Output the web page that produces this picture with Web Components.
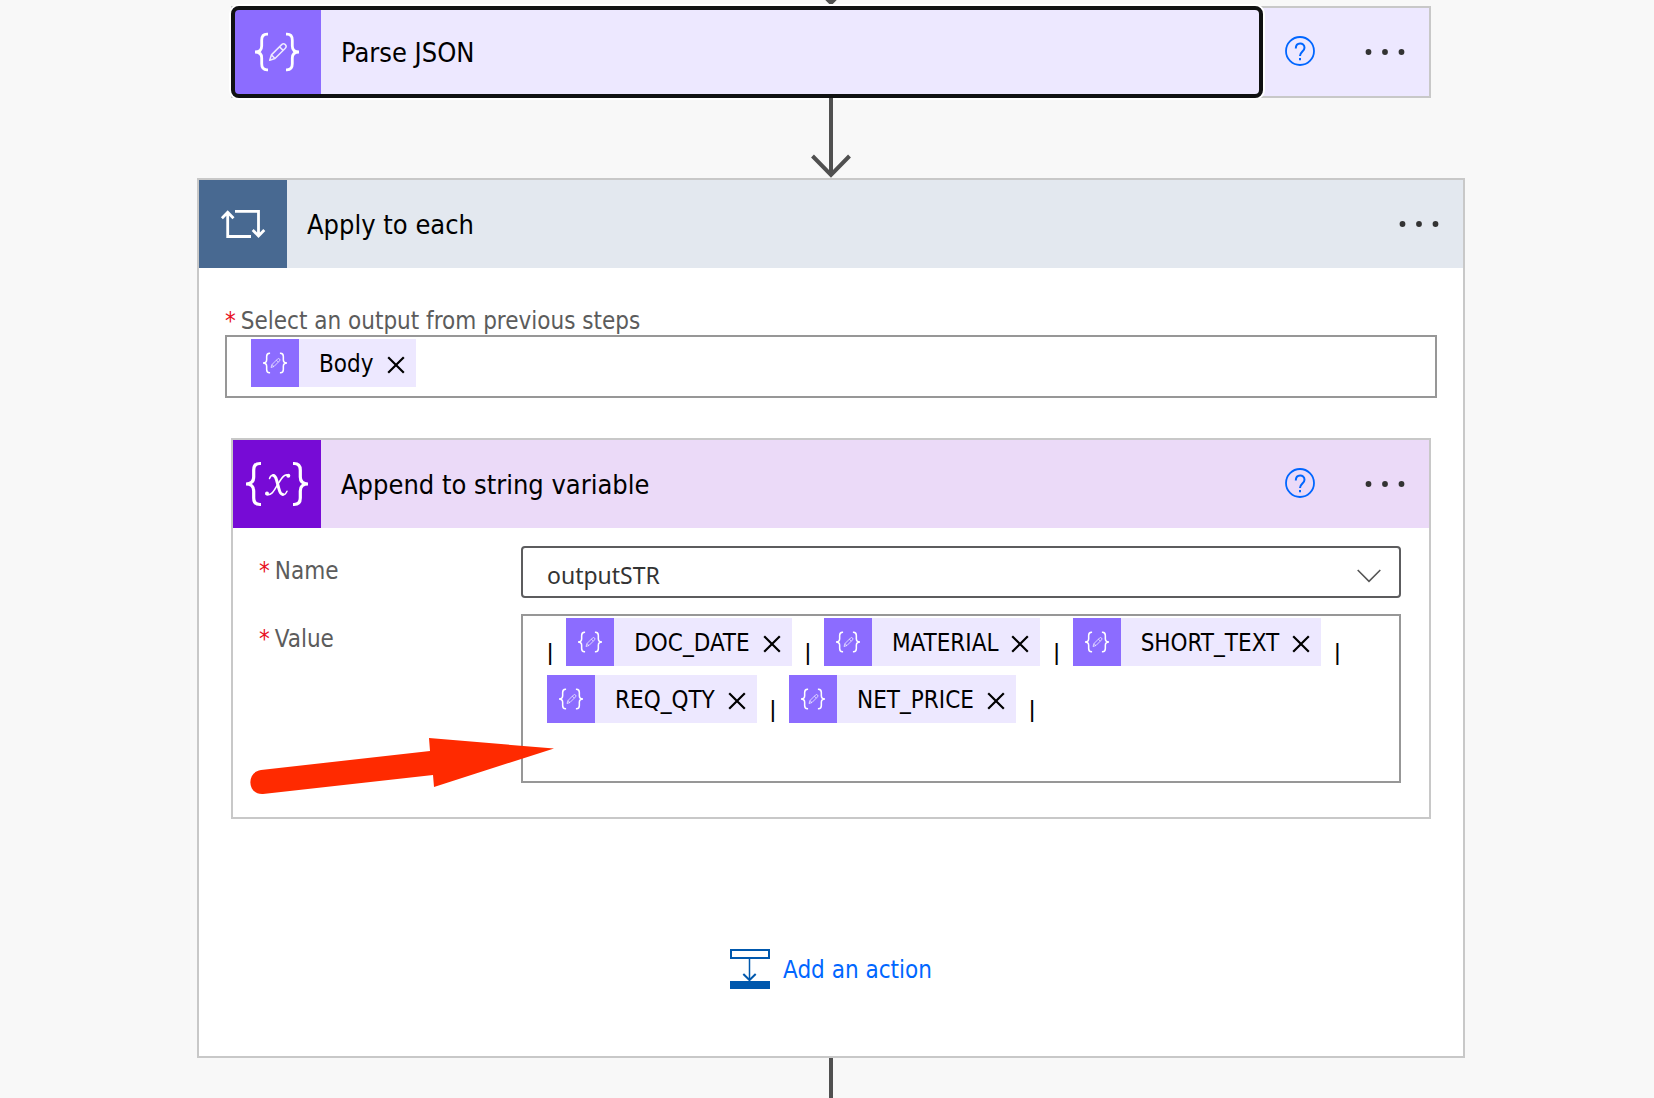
<!DOCTYPE html>
<html lang="en">
<head>
<meta charset="utf-8">
<meta name="viewport" content="width=device-width, initial-scale=1">
<title>Flow designer</title>
<style>
  body {
    margin: 0;
    padding: 0 0 0 8px;
    background: #f8f8f8;
    color: #000;
    font-family: "DejaVu Sans Condensed", "Noto Sans", sans-serif;
    font-size: 24px;
  }
</style>
</head>
<body>
<flow-canvas>
  <flow-connector size="stub" arrow></flow-connector>
  <flow-card class="step" kind="json" heading="Parse JSON" help focused></flow-card>
  <flow-connector size="full" arrow></flow-connector>
  <flow-card kind="loop" heading="Apply to each">
    <flow-scope>
      <token-field label="Select an output from previous steps">
        <flow-token>Body</flow-token>
      </token-field>
      <flow-card class="nested" kind="variable" heading="Append to string variable" help>
        <flow-form>
          <select-field label="Name" value="outputSTR"></select-field>
          <token-field label="Value" inline>
            <token-bar></token-bar>
            <flow-token>DOC_DATE</flow-token>
            <token-bar></token-bar>
            <flow-token>MATERIAL</flow-token>
            <token-bar></token-bar>
            <flow-token>SHORT_TEXT</flow-token>
            <token-bar></token-bar>
            <flow-token>REQ_QTY</flow-token>
            <token-bar></token-bar>
            <flow-token>NET_PRICE</flow-token>
            <token-bar></token-bar>
          </token-field>
        </flow-form>
        <pointer-arrow></pointer-arrow>
      </flow-card>
      <add-action>Add an action</add-action>
    </flow-scope>
  </flow-card>
  <flow-connector size="tail"></flow-connector>
</flow-canvas>

<script>
const define = (name, render) => customElements.define(name, class extends HTMLElement {
  constructor() {
    super();
    this.attachShadow({ mode: "open" });
  }
  connectedCallback() {
    this.shadowRoot.innerHTML = render(this);
  }
});

const icons = {
  json: `<svg viewBox="0 0 88 88" fill="none" stroke="#fff" aria-hidden="true">
    <g stroke-width="2.8">
      <path d="M35 26.2h-1c-3.6 0-5.3 2.2-5.3 6V38c0 3.700-2 6-6.700 6 4.700 0 6.700 2.300 6.700 6v5.800c0 3.800 1.700 6 5.300 6h1"/>
      <path d="M53 26.200h1c3.600 0 5.300 2.200 5.300 6V38c0 3.700 2 6 6.700 6-4.700 0-6.700 2.300-6.700 6v5.800c0 3.800-1.700 6-5.300 6h-1"/>
    </g>
    <path stroke-width="1.500" stroke-opacity=".85" stroke-linejoin="round" d="M36.700 52.200l1.700-5.300 10.300-10.300a2.500 2.500 0 0 1 3.600 3.600L42 50.500zM38.400 46.900l3.600 3.600M46.500 38.800l3.600 3.600"/>
  </svg>`,
  loop: `<svg viewBox="0 0 88 88" fill="none" stroke="#fff" stroke-width="2.800" aria-hidden="true">
    <path d="M28.700 31.500V56.500H52M22.900 38.200l5.800-6 5.800 6"/>
    <path d="M36 31.300h23.500V56M53.700 50l5.800 6 5.800-6"/>
  </svg>`,
  variable: `<svg viewBox="0 0 88 88" fill="none" stroke="#fff" aria-hidden="true">
    <g stroke-width="3.200">
      <path d="M28 23.500h-1c-4.500 0-6.300 2.200-6.300 6.500v7c0 4.500-2 7-7.700 7 5.700 0 7.700 2.500 7.700 7v7c0 4.300 1.800 6.500 6.300 6.500h1"/>
      <path d="M60 23.500h1c4.500 0 6.300 2.200 6.300 6.500v7c0 4.500 2 7 7.700 7-5.700 0-7.700 2.500-7.700 7v7c0 4.300-1.800 6.500-6.300 6.500h-1"/>
    </g>
    <g stroke-linecap="round">
      <path stroke-width="3" d="M40.500 35.500c2 .3 2.500 2.500 3.200 5l2.300 8.500c.8 3.300 1.600 5.300 3.600 5.300"/>
      <path stroke-width="1.500" d="M36.500 38.500c.8-2.300 2.200-3.500 4.200-3.400M49.500 55c2 0 3.500-1.500 4.500-3.800"/>
      <path stroke-width="1.600" d="M55.500 35.300c-4-2-6.700 2.700-10.500 8.700s-6.500 12.500-11.500 10.300"/>
    </g>
    <g fill="#fff" stroke="none"><circle cx="55.300" cy="35.800" r="2"/><circle cx="34" cy="53.600" r="2"/></g>
  </svg>`
};

define("flow-canvas", () => `
  <style>
    :host { display: block; }
    main { max-width: 1268px; margin: 0 auto; display: flex; flex-direction: column; }
    ::slotted(.step) { margin: 0 34px; }
  </style>
  <main><slot></slot></main>`);

define("flow-connector", el => `
  <style>
    :host { display: flex; justify-content: center; align-items: flex-end; position: relative; overflow: hidden; height: 80px; }
    :host([size="stub"]) { height: 6px; }
    :host([size="tail"]) { height: 40px; }
    svg { display: block; flex: none; }
  </style>
  <svg width="44" height="80" viewBox="0 0 44 80" fill="none" stroke="#505050" stroke-width="4" aria-hidden="true">
    <path d="${el.hasAttribute("arrow") ? "M22 0v76M3.500 58L22 77l18.500-19" : "M22 0v80"}"/>
  </svg>`);

define("flow-card", el => `
  <style>
    :host { display: block; position: relative; border: 2px solid #c8c8c8; background: #fff; }
    header { display: flex; height: 88px; background: var(--tint); }
    :host([kind="json"]) { --accent: #8c6cff; --tint: #ede8ff; }
    :host([kind="loop"]) { --accent: #486991; --tint: #e3e8ef; }
    :host([kind="variable"]) { --accent: #770bd6; --tint: #ebdaf8; }
    button { margin: 0; padding: 0; border: 0; background: none; color: inherit; font: inherit; cursor: pointer; }
    .title { position: relative; flex: 1; min-width: 0; display: flex; align-items: center; gap: 20px; font-size: 27px; line-height: 36px; text-align: left; }
    .icon { width: 88px; height: 88px; background: var(--accent); }
    .text { padding-top: 2px; }
    :host([focused]) .title::after {
      content: ""; position: absolute; inset: -2px; border: 4px solid #101112; border-radius: 8px; box-shadow: 0 0 0 2px #fff;
    }
    .help { width: 78px; }
    .menu { width: 90px; }
    svg { display: block; }
    .help svg, .menu svg { margin: 0 auto; }
  </style>
  <header>
    <button class="title" type="button"><span class="icon">${icons[el.getAttribute("kind")]}</span><span class="text">${el.getAttribute("heading")}</span></button>
    ${el.hasAttribute("help") ? `<button class="help" type="button" aria-label="Help">
      <svg width="32" height="34" viewBox="0 0 32 34" fill="none" stroke="#0066ff" stroke-width="1.800">
        <circle cx="16" cy="16" r="14"/>
        <path stroke-width="2" d="M11.800 13.500c0-6.500 8.700-6.300 8.700-.8 0 3.700-4.500 4-4.500 8.300M16 23v2.200"/>
      </svg></button>` : ""}
    <button class="menu" type="button" aria-label="More commands">
      <svg width="42" height="8" viewBox="0 0 42 8" fill="#333"><circle cx="5.500" cy="4" r="2.900"/><circle cx="22" cy="4" r="2.900"/><circle cx="38.500" cy="4" r="2.900"/></svg>
    </button>
  </header>
  <slot></slot>`);

define("flow-scope", () => `
  <style>
    :host { display: flex; flex-direction: column; padding: 39px 26px 67px; }
    ::slotted(.nested) { margin: 40px 6px 130px; }
  </style>
  <slot></slot>`);

define("flow-form", () => `
  <style>
    :host { display: flex; flex-direction: column; gap: 16px; padding: 18px 28px 34px 26px; }
  </style>
  <slot></slot>`);

const fieldStyle = `
  :host { display: block; }
  .label { display: flex; gap: 5px; color: #5c5c5c; line-height: 28px; }
  .star { color: #e81123; }
  .inline { display: grid; grid-template-columns: 262px minmax(0, 1fr); }
  .inline > .label { padding-top: 11px; }
`;

define("token-field", el => `
  <style>${fieldStyle}
    .box { display: flex; flex-wrap: wrap; align-content: flex-start; row-gap: 9px; box-sizing: border-box; min-height: 63px; padding: 2px 24px; border: 2px solid #979797; background: #fff; outline: none; }
    .inline > .box { min-height: 169px; }
  </style>
  <div class="${el.hasAttribute("inline") ? "inline" : "stacked"}">
    <div class="label"><span class="star" aria-hidden="true">*</span><span id="label">${el.getAttribute("label")}</span></div>
    <div class="box" role="textbox" tabindex="0" aria-multiline="true" aria-required="true" aria-labelledby="label"><slot></slot></div>
  </div>`);

define("select-field", el => `
  <style>${fieldStyle}
    .control { display: grid; }
    select, svg { grid-area: 1 / 1; }
    select { appearance: none; box-sizing: border-box; width: 100%; height: 52px; margin: 0; padding: 6px 64px 0 24px; border: 2px solid #5c5c5e; border-radius: 4px; background: #fff; color: #333; font: 23px/32px "Noto Sans", sans-serif; }
    svg { justify-self: end; align-self: center; margin: 8px 20px 0 0; pointer-events: none; }
  </style>
  <div class="inline">
    <label class="label" for="control"><span class="star" aria-hidden="true">*</span><span>${el.getAttribute("label")}</span></label>
    <div class="control">
      <select id="control" required><option>${el.getAttribute("value")}</option></select>
      <svg width="24" height="14" viewBox="0 0 24 14" fill="none" stroke="#555" stroke-width="1.600" aria-hidden="true"><path d="M.700 1L12 12.400 23.300 1"/></svg>
    </div>
  </div>`);

define("flow-token", () => `
  <style>
    :host { display: inline-flex; align-items: center; height: 48px; background: #ede8ff; color: #000; line-height: 32px; }
    .icon { width: 48px; height: 48px; margin-right: 20px; background: #8c6cff; }
    .text { padding-top: 2px; }
    button { width: 42px; height: 48px; margin: 0; padding: 0 0 0 13px; border: 0; background: none; cursor: pointer; }
    svg { display: block; }
  </style>
  <span class="icon">${icons.json}</span>
  <span class="text"><slot></slot></span>
  <button type="button" aria-label="Remove"><svg width="18" height="22" viewBox="0 0 18 22" fill="none" stroke="#000" stroke-width="2.200" aria-hidden="true"><path d="M1.200 5.200l15.600 15.600M16.800 5.200L1.200 20.800"/></svg></button>`);

define("token-bar", () => `
  <style>
    :host { display: block; align-self: flex-end; margin: 0 13px; font: 24px/28px "Liberation Sans", sans-serif; color: #000; }
    :host(:first-child) { margin-left: 0; }
  </style>|`);

define("add-action", () => `
  <style>
    :host { display: flex; justify-content: center; }
    button { display: flex; align-items: center; gap: 13px; margin: 0; padding: 0; border: 0; background: none; color: #0066ff; font: inherit; line-height: 28px; cursor: pointer; }
    .text { padding-top: 2px; }
    svg { display: block; }
  </style>
  <button type="button">
    <svg width="40" height="40" viewBox="0 0 40 40" fill="none" stroke="#0058ad" stroke-width="2" aria-hidden="true">
      <path d="M1 1h38v8H1z"/><path stroke-width="1.500" d="M19.500 10v20"/><path d="M13.300 25l6.200 6 6.200-6"/><path fill="#0058ad" stroke="none" d="M0 32h40v8H0z"/>
    </svg>
    <span class="text"><slot></slot></span>
  </button>`);

/* Annotation drawn over the card, pointing at the value box. */
define("pointer-arrow", () => `
  <style>
    :host { position: absolute; left: 17px; top: 297px; pointer-events: none; }
    svg { display: block; }
  </style>
  <svg width="306" height="60" viewBox="0 0 306 60" fill="#ff2a00" aria-hidden="true">
    <path d="M11 33L180 14 179 1 304 11.500 184 50 183 38 13 57C-3 58-4 35 11 33z"/>
  </svg>`);
</script>
</body>
</html>
